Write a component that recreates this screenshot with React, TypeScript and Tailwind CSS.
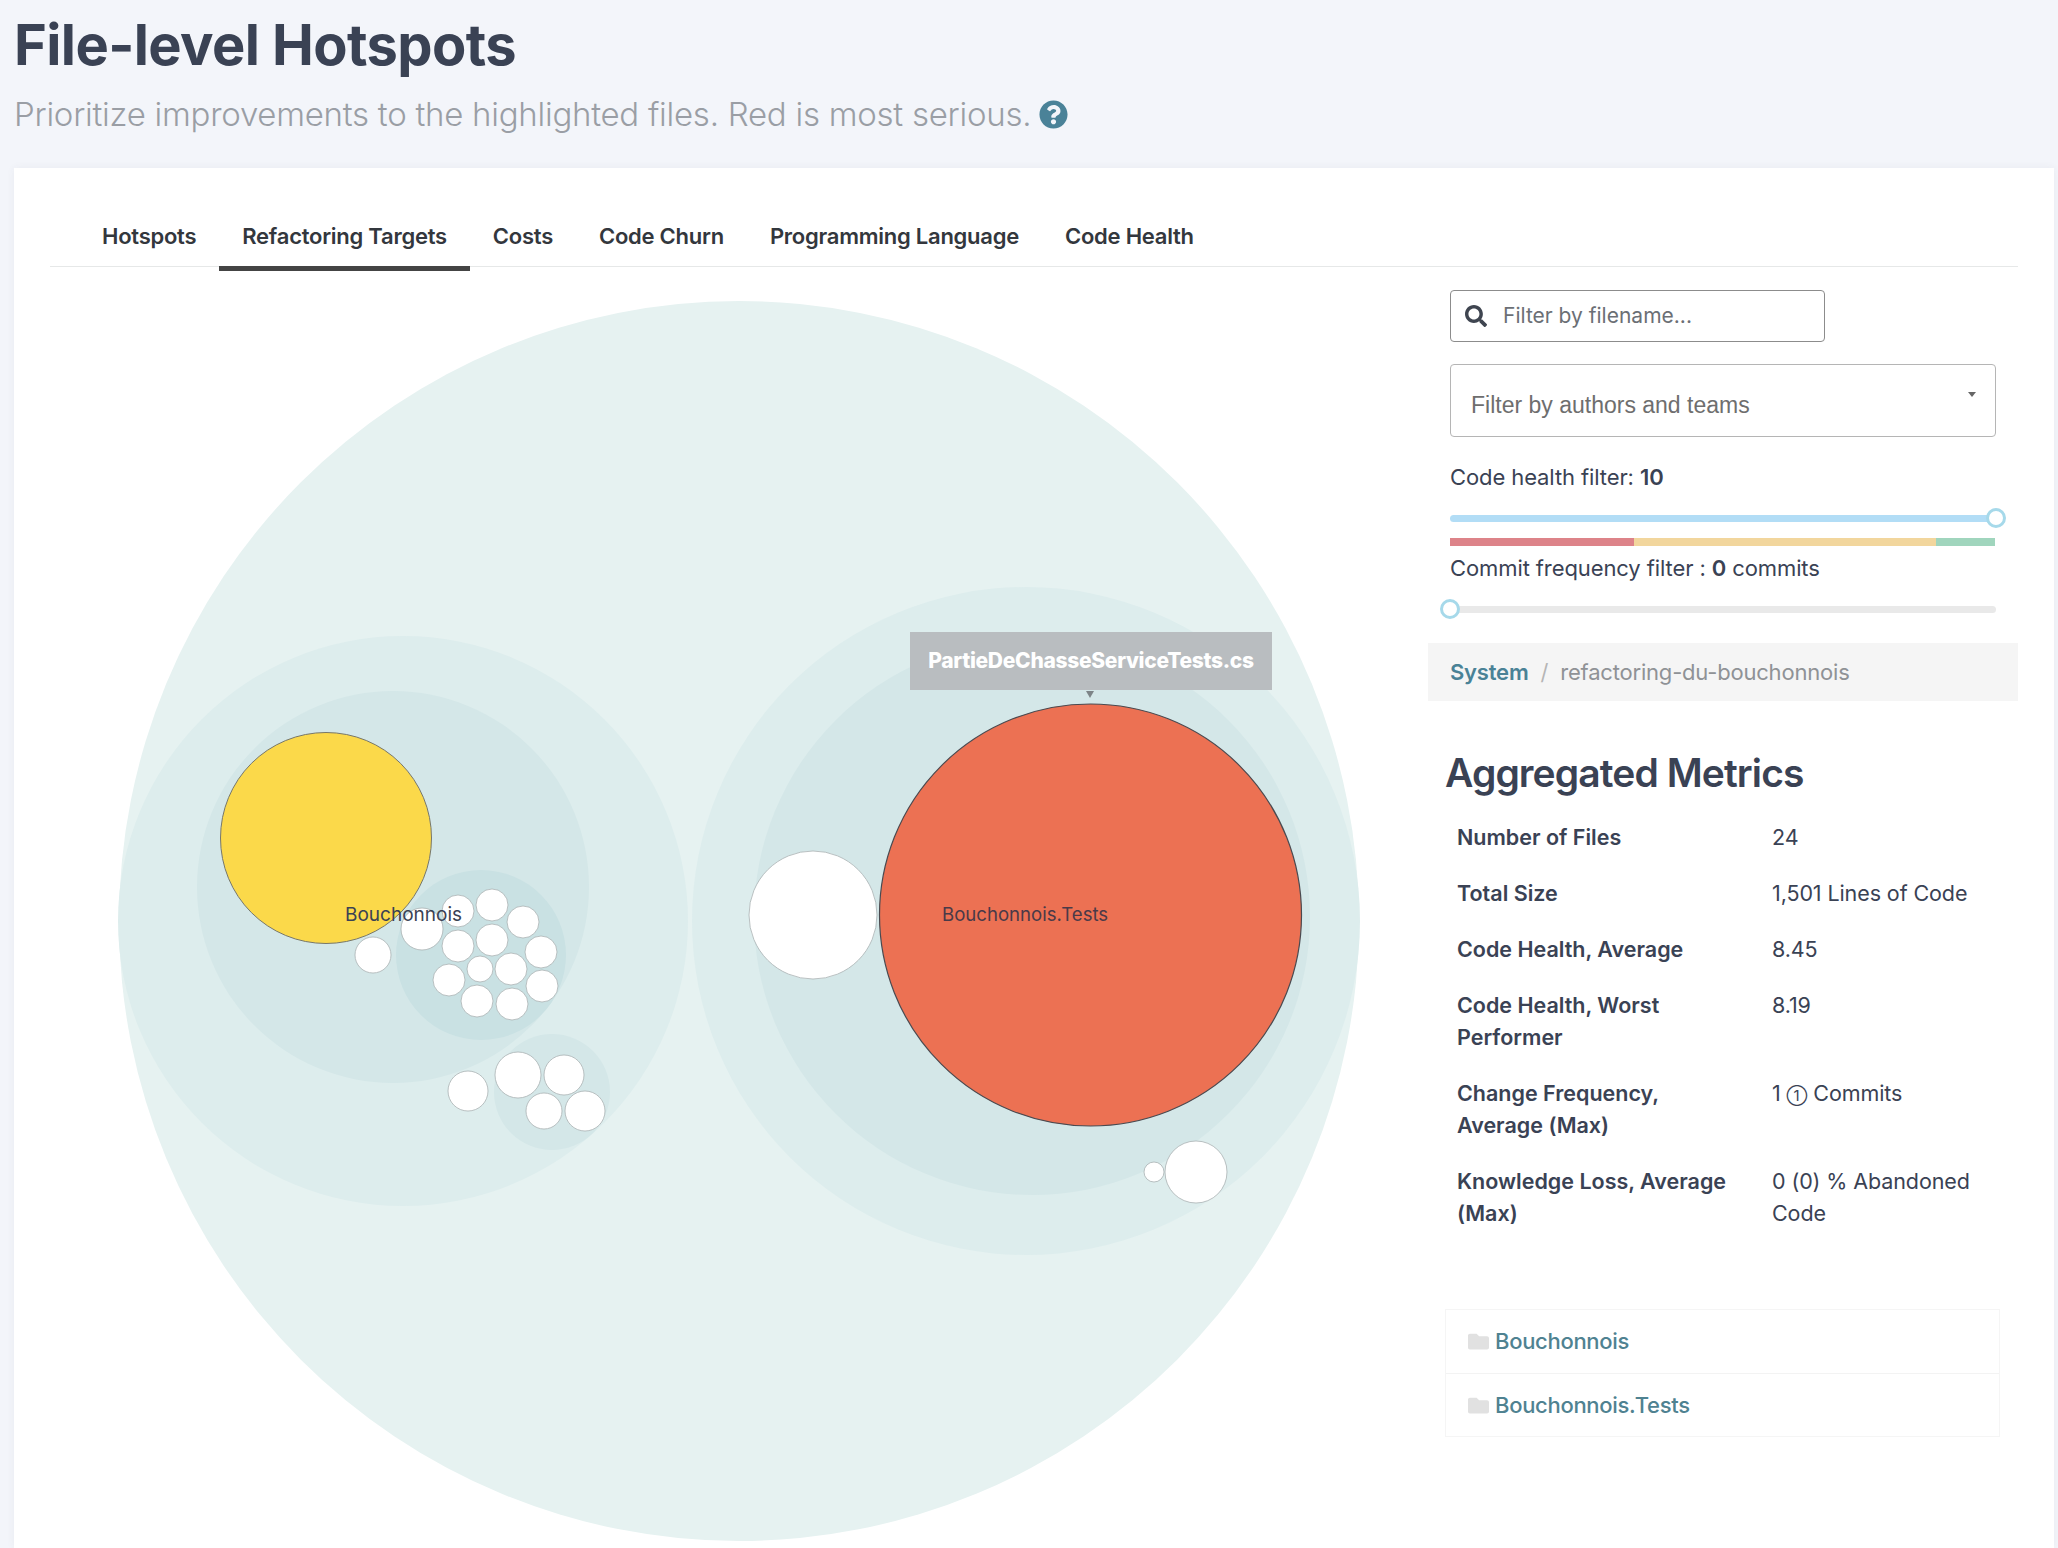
import { FaFolder, FaQuestionCircle, FaSearch } from 'react-icons/fa'

const tabs = ['Hotspots', 'Refactoring Targets', 'Costs', 'Code Churn', 'Programming Language', 'Code Health']

const metrics: [string, React.ReactNode][] = [
  ['Number of Files', '24'],
  ['Total Size', '1,501 Lines of Code'],
  ['Code Health, Average', '8.45'],
  ['Code Health, Worst Performer', '8.19'],
  [
    'Change Frequency, Average (Max)',
    <>
      1 <span className="text-[15px]">①</span> Commits
    </>,
  ],
  ['Knowledge Loss, Average (Max)', '0 (0) % Abandoned Code'],
]

// small white files, [cx, cy, r] in chart pixels
const smallFiles = [
  [373, 954, 18],
  [422, 928, 21],
  [458, 910, 16],
  [492, 904, 16],
  [523, 921, 16],
  [458, 945, 16],
  [492, 939, 16],
  [541, 951, 16],
  [449, 979, 16],
  [480, 968, 13],
  [511, 968, 16],
  [542, 985, 16],
  [477, 1000, 16],
  [512, 1003, 16],
  [468, 1090, 20],
  [518, 1074, 23],
  [564, 1074, 20],
  [544, 1110, 18],
  [585, 1110, 20],
  [813, 914, 64],
  [1196, 1171, 31],
  [1154, 1171, 10],
]

function Chart() {
  return (
    <div className="relative h-[1277px] w-[1378px] shrink-0">
      <svg viewBox="50 266 1378 1277" className="block h-[1277px] w-[1378px]">
        <circle cx="739" cy="920" r="620" fill="#e6f2f1" />
        <circle cx="403" cy="920" r="285" fill="#ddeded" />
        <circle cx="393" cy="886" r="196" fill="#d4e7e8" />
        <circle cx="481" cy="954" r="85" fill="#c9e1e3" />
        <circle cx="552" cy="1091" r="58" fill="#d4e7e8" />
        <circle cx="1026" cy="920" r="334" fill="#ddeded" />
        <circle cx="1032" cy="916" r="278" fill="#d4e7e8" />
        <circle cx="326" cy="837" r="105.5" fill="#fbd94a" stroke="#77776a" strokeWidth="1" />
        <circle cx="1090.5" cy="914" r="211" fill="#ec7153" stroke="#4a4a50" strokeWidth="1.2" />
        {smallFiles.map(([cx, cy, r], i) => (
          <circle key={i} cx={cx} cy={cy} r={r} fill="#ffffff" stroke="#a9b1b2" strokeWidth="0.8" />
        ))}
        <text x="345" y="920" fontSize="19" fill="#3a4254" fontFamily="Inter, sans-serif">
          Bouchonnois
        </text>
        <text x="942" y="920" fontSize="18.6" fill="#4a3a48" fontFamily="Inter, sans-serif">
          Bouchonnois.Tests
        </text>
        <path d="M1086 690h8l-4 7z" fill="#7d8487" />
      </svg>
      <div className="absolute left-[860px] top-[365px] flex h-[58px] w-[362px] items-center justify-center bg-[#b9bdc0] text-[21px] font-extrabold tracking-[-0.3px] text-white">
        PartieDeChasseServiceTests.cs
      </div>
    </div>
  )
}

function Filters() {
  return (
    <div className="pl-[22px]">
      <div className="flex h-[52px] w-[375px] items-center rounded-[4px] border border-[#8c8c8c] pl-[14px]">
        <FaSearch className="text-[22px] text-[#3f4550]" />
        <span className="ml-[16px] text-[21px] text-[#6b6f75]">Filter by filename...</span>
      </div>
      <div className="relative mt-[22px] h-[73px] w-[546px] rounded-[4px] border border-[#b5b5b5] pl-[20px] pt-[25px] font-['Liberation_Sans',sans-serif] text-[23px] leading-[30px] text-[#6e6e6e]">
        Filter by authors and teams
        <span className="absolute right-[19px] top-[27px] h-0 w-0 border-x-[4.5px] border-t-[5px] border-x-transparent border-t-[#666]" />
      </div>
      <p className="mt-[24px] text-[22px] leading-[32px] tracking-[-0.1px] text-[#3a4254]">
        Code health filter: <b className="font-semibold">10</b>
      </p>
      <div className="relative mt-[22px] h-[7px] w-[546px] rounded-full bg-[#b2ddf6]">
        <span className="absolute right-[-10px] top-[-7px] h-[20px] w-[20px] rounded-full border-[3px] border-[#a6d9ea] bg-white" />
      </div>
      <div className="mt-[16px] flex h-[8px] w-[545px]">
        <div className="w-[184px] bg-[#dd8389]" />
        <div className="w-[302px] bg-[#f2d69d]" />
        <div className="w-[59px] bg-[#a0d5bd]" />
      </div>
      <p className="mt-[6px] text-[22px] leading-[32px] tracking-[-0.1px] text-[#3a4254]">
        Commit frequency filter : <b className="font-semibold">0</b> commits
      </p>
      <div className="relative mt-[22px] h-[7px] w-[546px] rounded-full bg-[#e9e9e9]">
        <span className="absolute left-[-10px] top-[-7px] h-[20px] w-[20px] rounded-full border-[3px] border-[#a6d9ea] bg-white" />
      </div>
    </div>
  )
}

export default function App() {
  return (
    <div className="h-[1548px] overflow-hidden bg-[#f3f5fa] font-['Inter',sans-serif]">
      <header className="h-[168px] pl-[14px] pt-[12px]">
        <h1 className="text-[56px] font-bold leading-[66px] tracking-[-0.6px] text-[#3a4254]">File-level Hotspots</h1>
        <p className="mt-[14px] flex items-center text-[33px] font-light leading-[44px] tracking-[-0.26px] text-[#9a9ea5]">
          Prioritize improvements to the highlighted files. Red is most serious.
          <FaQuestionCircle className="ml-[8px] text-[29px] text-[#4a8298]" />
        </p>
      </header>

      <main className="ml-[14px] mr-[4px] h-[1380px] bg-white px-[36px] shadow-[0_0_8px_rgba(60,70,90,0.06)]">
        <nav className="flex h-[99px] items-end border-b border-[#e6e8e8] pl-[29px]">
          {tabs.map((tab, i) => (
            <div
              key={tab}
              className={`mb-[-5px] h-[54px] border-b-[5px] px-[23px] text-[22px] font-semibold leading-[38px] tracking-[-0.25px] text-[#33373d] ${
                i === 1 ? 'border-[#444444]' : 'border-transparent'
              }`}
            >
              {tab}
            </div>
          ))}
        </nav>

        <div className="flex">
          <Chart />
          <aside className="w-[590px] shrink-0 pt-[23px]">
            <Filters />

            <div className="mt-[30px] flex h-[58px] items-center bg-[#f5f5f5] pl-[22px] text-[22px] tracking-[-0.2px]">
              <span className="font-semibold text-[#4a8296]">System</span>
              <span className="mx-[12px] text-[#b5b5b5]">/</span>
              <span className="text-[#8f9296]">refactoring-du-bouchonnois</span>
            </div>

            <h2 className="ml-[17px] mt-[47px] text-[39px] font-semibold leading-[50px] tracking-[-0.9px] text-[#3a4254]">
              Aggregated Metrics
            </h2>

            <table className="ml-[17px] mt-[11px] w-[551px] table-fixed text-[21.5px] leading-[32px] text-[#3a4254]">
              <tbody>
                {metrics.map(([label, value]) => (
                  <tr key={label}>
                    <td className="w-[315px] py-[12px] pl-[12px] pr-[10px] align-top font-semibold">{label}</td>
                    <td className="py-[12px] pl-[12px] align-top font-normal tracking-[-0.1px]">{value}</td>
                  </tr>
                ))}
              </tbody>
            </table>

            <ul className="ml-[17px] mt-[68px] w-[555px] border border-[#f5f5f5] text-[22px] font-medium tracking-[-0.3px] text-[#4f8291]">
              {['Bouchonnois', 'Bouchonnois.Tests'].map((name, i) => (
                <li key={name} className={`flex h-[63px] items-center pl-[22px] ${i > 0 ? 'border-t border-[#f3f3f3]' : ''}`}>
                  <FaFolder className="mr-[6px] text-[21px] text-[#e1e1e1]" />
                  {name}
                </li>
              ))}
            </ul>
          </aside>
        </div>
      </main>
    </div>
  )
}
